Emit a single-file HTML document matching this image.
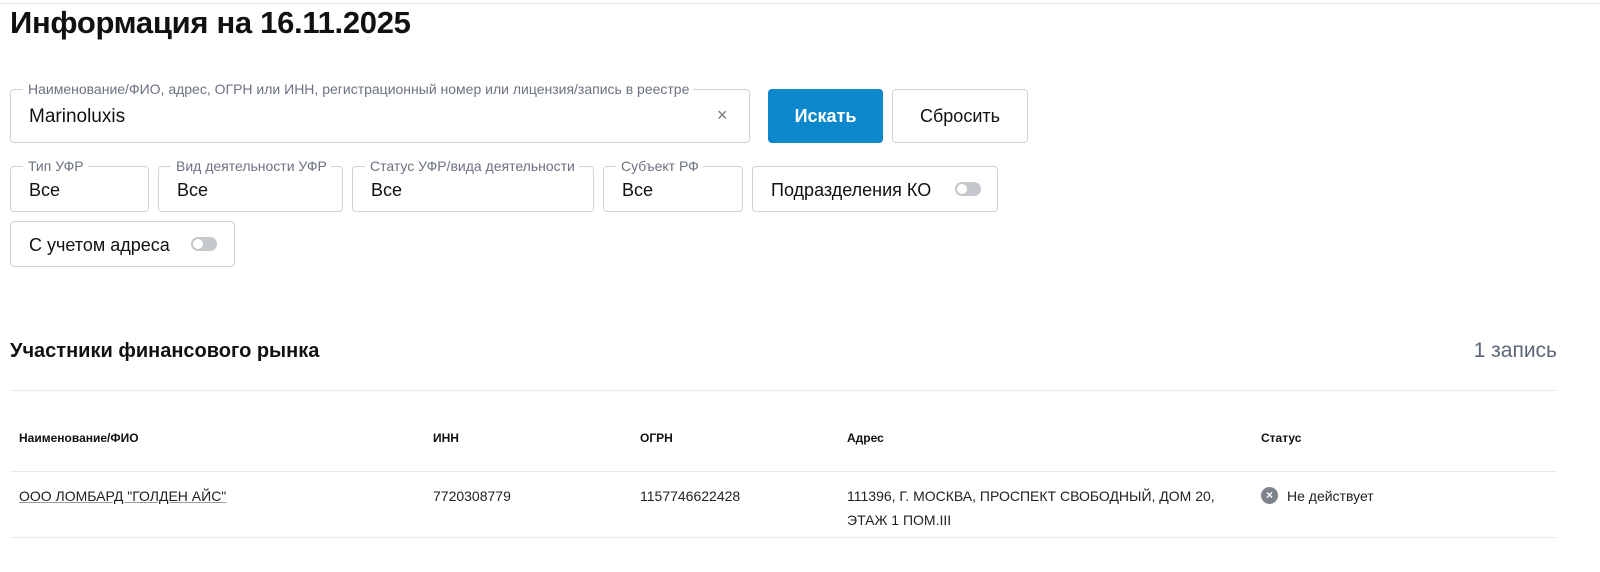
<!DOCTYPE html>
<html><head><meta charset="utf-8"><style>
*{box-sizing:border-box;margin:0;padding:0}
body{width:1600px;height:572px;background:#fff;font-family:"Liberation Sans",sans-serif;color:#111;position:relative;overflow:hidden}
.a{position:absolute}
.box{position:absolute;border:1px solid #cfd3d8;border-radius:4px;background:#fff}
.lbl{position:absolute;top:-9px;left:12px;background:#fff;padding:0 4px 0 5px;font-size:14px;color:#6b7280;white-space:nowrap;line-height:16px}
.val{position:absolute;left:18px;font-size:18px;color:#111}
.tog{position:absolute;width:26px;height:14px;border-radius:7px;background:#c4c7cc}
.tog:after{content:"";position:absolute;left:2px;top:2px;width:10px;height:10px;border-radius:50%;background:#fff}
.th{position:absolute;top:431px;font-size:12px;font-weight:bold;color:#111}
.td{position:absolute;top:484px;font-size:14px;color:#222;line-height:24px}
.hr{position:absolute;left:10px;width:1547px;height:1px;background:#e8eaed}
</style></head><body>
<div class="a" style="left:0;top:3px;width:1600px;height:1px;background:#e5e7ea"></div>
<div class="a" style="left:10px;top:5px;font-size:31px;font-weight:bold;letter-spacing:-0.3px">Информация на 16.11.2025</div>

<div class="box" style="left:10px;top:89px;width:740px;height:54px">
<div class="lbl">Наименование/ФИО, адрес, ОГРН или ИНН, регистрационный номер или лицензия/запись в реестре</div>
<div class="val" style="top:16px;font-size:19px">Marinoluxis</div>
<div class="a" style="left:706px;top:15px;font-size:18px;color:#777">×</div>
</div>
<div class="a" style="left:768px;top:89px;width:115px;height:54px;background:#0a88cb;border-radius:4px;color:#fff;font-weight:bold;font-size:18px;text-align:center;line-height:54px">Искать</div>
<div class="box" style="left:892px;top:89px;width:136px;height:54px;text-align:center;line-height:52px;font-size:18px">Сбросить</div>

<div class="box" style="left:10px;top:166px;width:139px;height:46px"><div class="lbl">Тип УФР</div><div class="val" style="top:13px">Все</div></div>
<div class="box" style="left:158px;top:166px;width:185px;height:46px"><div class="lbl">Вид деятельности УФР</div><div class="val" style="top:13px">Все</div></div>
<div class="box" style="left:352px;top:166px;width:242px;height:46px"><div class="lbl">Статус УФР/вида деятельности</div><div class="val" style="top:13px">Все</div></div>
<div class="box" style="left:603px;top:166px;width:140px;height:46px"><div class="lbl">Субъект РФ</div><div class="val" style="top:13px">Все</div></div>
<div class="box" style="left:752px;top:166px;width:246px;height:46px"><div class="val" style="top:13px">Подразделения КО</div><div class="tog" style="left:202px;top:15px"></div></div>
<div class="box" style="left:10px;top:221px;width:225px;height:46px"><div class="val" style="top:13px">С учетом адреса</div><div class="tog" style="left:180px;top:15px"></div></div>

<div class="a" style="left:10px;top:340px;font-size:20px;font-weight:bold">Участники финансового рынка</div>
<div class="a" style="right:43px;top:339px;font-size:21px;color:#5b6779">1 запись</div>
<div class="hr" style="top:390px"></div>

<div class="th" style="left:19px">Наименование/ФИО</div>
<div class="th" style="left:433px">ИНН</div>
<div class="th" style="left:640px">ОГРН</div>
<div class="th" style="left:847px">Адрес</div>
<div class="th" style="left:1261px">Статус</div>
<div class="hr" style="top:471px"></div>

<div class="td" style="left:19px;text-decoration:underline;text-decoration-color:#999">ООО ЛОМБАРД "ГОЛДЕН АЙС"</div>
<div class="td" style="left:433px">7720308779</div>
<div class="td" style="left:640px">1157746622428</div>
<div class="td" style="left:847px">111396, Г. МОСКВА, ПРОСПЕКТ СВОБОДНЫЙ, ДОМ 20,<br>ЭТАЖ 1 ПОМ.III</div>
<div class="a" style="left:1261px;top:487px;width:17px;height:17px;border-radius:50%;background:#7d838c;color:#fff;font-size:12px;font-weight:bold;text-align:center;line-height:17px">×</div>
<div class="td" style="left:1287px">Не действует</div>
<div class="hr" style="top:537px"></div>
</body></html>
